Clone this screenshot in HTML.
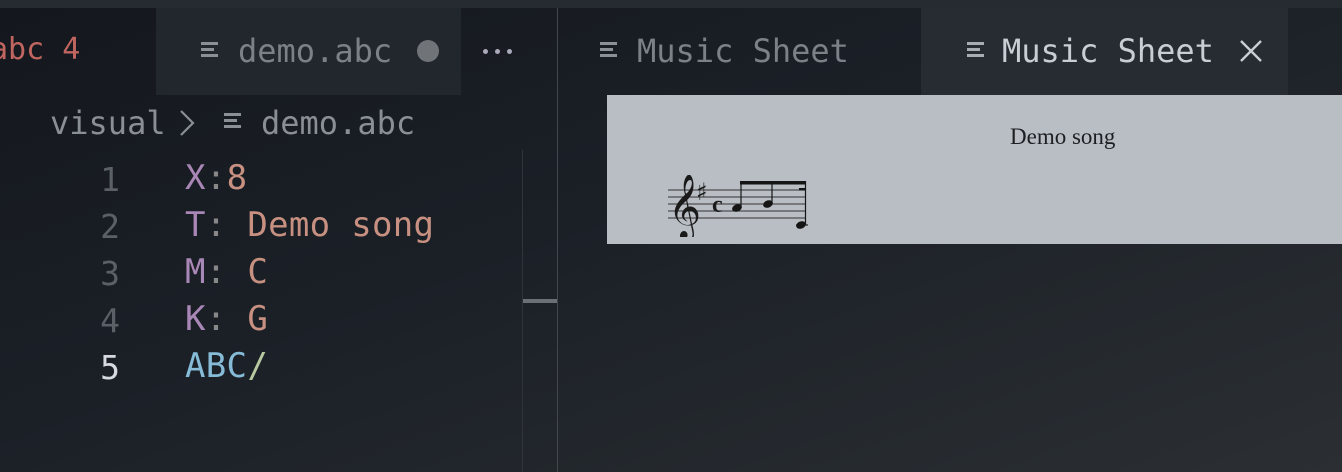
<!DOCTYPE html>
<html><head><meta charset="utf-8"><style>
*{margin:0;padding:0;box-sizing:border-box}
body{width:1342px;height:472px;overflow:hidden;background:linear-gradient(160deg,#14171d 0%,#1b2027 45%,#2b2f33 100%);position:relative;font-family:"DejaVu Sans Mono","Liberation Mono",monospace}
.a{position:absolute;white-space:pre}
.ic{position:absolute;width:17px;height:16px}
.ic i{position:absolute;left:0;height:3px;background:currentColor}
</style></head><body>
<div class="a" style="left:0;top:0;width:1342px;height:8px;background:#262a31"></div>
<!-- tabs -->
<div class="a" style="top:32px;font-size:30px;color:#c0655f;left:-10px">abc 4</div>
<div class="a" style="left:156px;top:8px;width:305px;height:87px;background:#22262d"></div>
<div class="ic" style="left:201px;top:42px;color:#8b9097"><i style="top:0;width:17px"></i><i style="top:6px;width:13px"></i><i style="top:12px;width:17px"></i></div>
<div class="a" style="left:238px;top:32px;font-size:32px;color:#7c8187">demo.abc</div>
<div class="a" style="left:417px;top:40px;width:22px;height:22px;border-radius:50%;background:#707479"></div>
<div class="a" style="left:483px;top:49px;width:5px;height:5px;border-radius:50%;background:#aab;box-shadow:12px 0 #aab,24px 0 #aab"></div>
<div class="a" style="left:557px;top:8px;width:1px;height:464px;background:#43474d"></div>
<div class="ic" style="left:600px;top:42px;color:#8b9097"><i style="top:0;width:17px"></i><i style="top:6px;width:13px"></i><i style="top:12px;width:17px"></i></div>
<div class="a" style="left:637px;top:32px;font-size:32px;color:#7c8187">Music Sheet</div>
<div class="a" style="left:921px;top:8px;width:367px;height:87px;background:#272b32"></div>
<div class="ic" style="left:967px;top:42px;color:#a8adb3"><i style="top:0;width:17px"></i><i style="top:6px;width:13px"></i><i style="top:12px;width:17px"></i></div>
<div class="a" style="left:1002px;top:32px;font-size:32px;color:#c9ced4">Music Sheet</div>
<svg class="a" style="left:1239px;top:39px" width="24" height="24"><path d="M2 2L22 22M22 2L2 22" stroke="#c9ced4" stroke-width="2.4"/></svg>
<!-- breadcrumb -->
<div class="a" style="left:50px;top:104px;font-size:32px;color:#8a8f95">visual</div>
<svg class="a" style="left:178px;top:109px" width="18" height="28"><path d="M3 2L15 14L3 26" stroke="#8a8f95" stroke-width="2.2" fill="none"/></svg>
<div class="ic" style="left:224px;top:113px;color:#8b9097"><i style="top:0;width:17px"></i><i style="top:6px;width:13px"></i><i style="top:12px;width:17px"></i></div>
<div class="a" style="left:261px;top:104px;font-size:32px;color:#8a8f95">demo.abc</div>
<!-- code -->
<div class="a" style="left:98px;top:156px;font-size:33px;line-height:47px;color:#5b6066;text-align:right;width:22px">1
2
3
4
<span style="color:#d6dadf">5</span></div>
<div class="a" style="left:185px;top:155px;font-size:34px;line-height:47px;letter-spacing:0.3px"><span style="color:#a886b5">X</span><span style="color:#888">:</span><span style="color:#c79080">8</span>
<span style="color:#a886b5">T</span><span style="color:#888">:</span> <span style="color:#c79080">Demo song</span>
<span style="color:#a886b5">M</span><span style="color:#888">:</span> <span style="color:#c79080">C</span>
<span style="color:#a886b5">K</span><span style="color:#888">:</span> <span style="color:#c79080">G</span>
<span style="color:#86bcd8">ABC</span><span style="color:#b8c8a0">/</span></div>
<div class="a" style="left:522px;top:150px;width:1px;height:322px;background:#30343a"></div>
<div class="a" style="left:523px;top:299px;width:34px;height:4px;background:#6b7075"></div>
<!-- sheet -->
<div class="a" style="left:607px;top:95px;width:735px;height:149px;background:#b9bec4"></div>
<div class="a" style="left:1010px;top:124px;font-family:'Liberation Serif',serif;font-size:23px;color:#1d1f22">Demo song</div>
<svg class="a" style="left:660px;top:175px" width="160" height="62">
<g stroke="#333" stroke-width="1"><path d="M8 15H146M8 22H146M8 29H146M8 36H146M8 43H146"/></g>
<path d="M136 50H148" stroke="#222" stroke-width="1.2"/>
<text x="8" y="50" font-family="DejaVu Sans" font-size="56" fill="#1a1a1a">𝄞</text>
<text x="36" y="25" font-family="DejaVu Sans" font-size="24" fill="#1a1a1a">♯</text>
<text x="52" y="37" font-family="Liberation Serif" font-size="24" font-weight="bold" fill="#1a1a1a">c</text>
<g fill="#151515"><ellipse cx="77" cy="33" rx="5" ry="3.6" transform="rotate(-20 77 33)"/><ellipse cx="108" cy="29" rx="5" ry="3.6" transform="rotate(-20 108 29)"/><ellipse cx="141" cy="50" rx="5" ry="3.6" transform="rotate(-20 141 50)"/>
<rect x="80" y="6" width="66" height="3.5"/><rect x="139" y="13" width="7" height="2.5"/></g>
<g stroke="#151515" stroke-width="1.2"><path d="M81 6V33M112 6V29M145.5 6V50"/></g>
</svg>
</body></html>
